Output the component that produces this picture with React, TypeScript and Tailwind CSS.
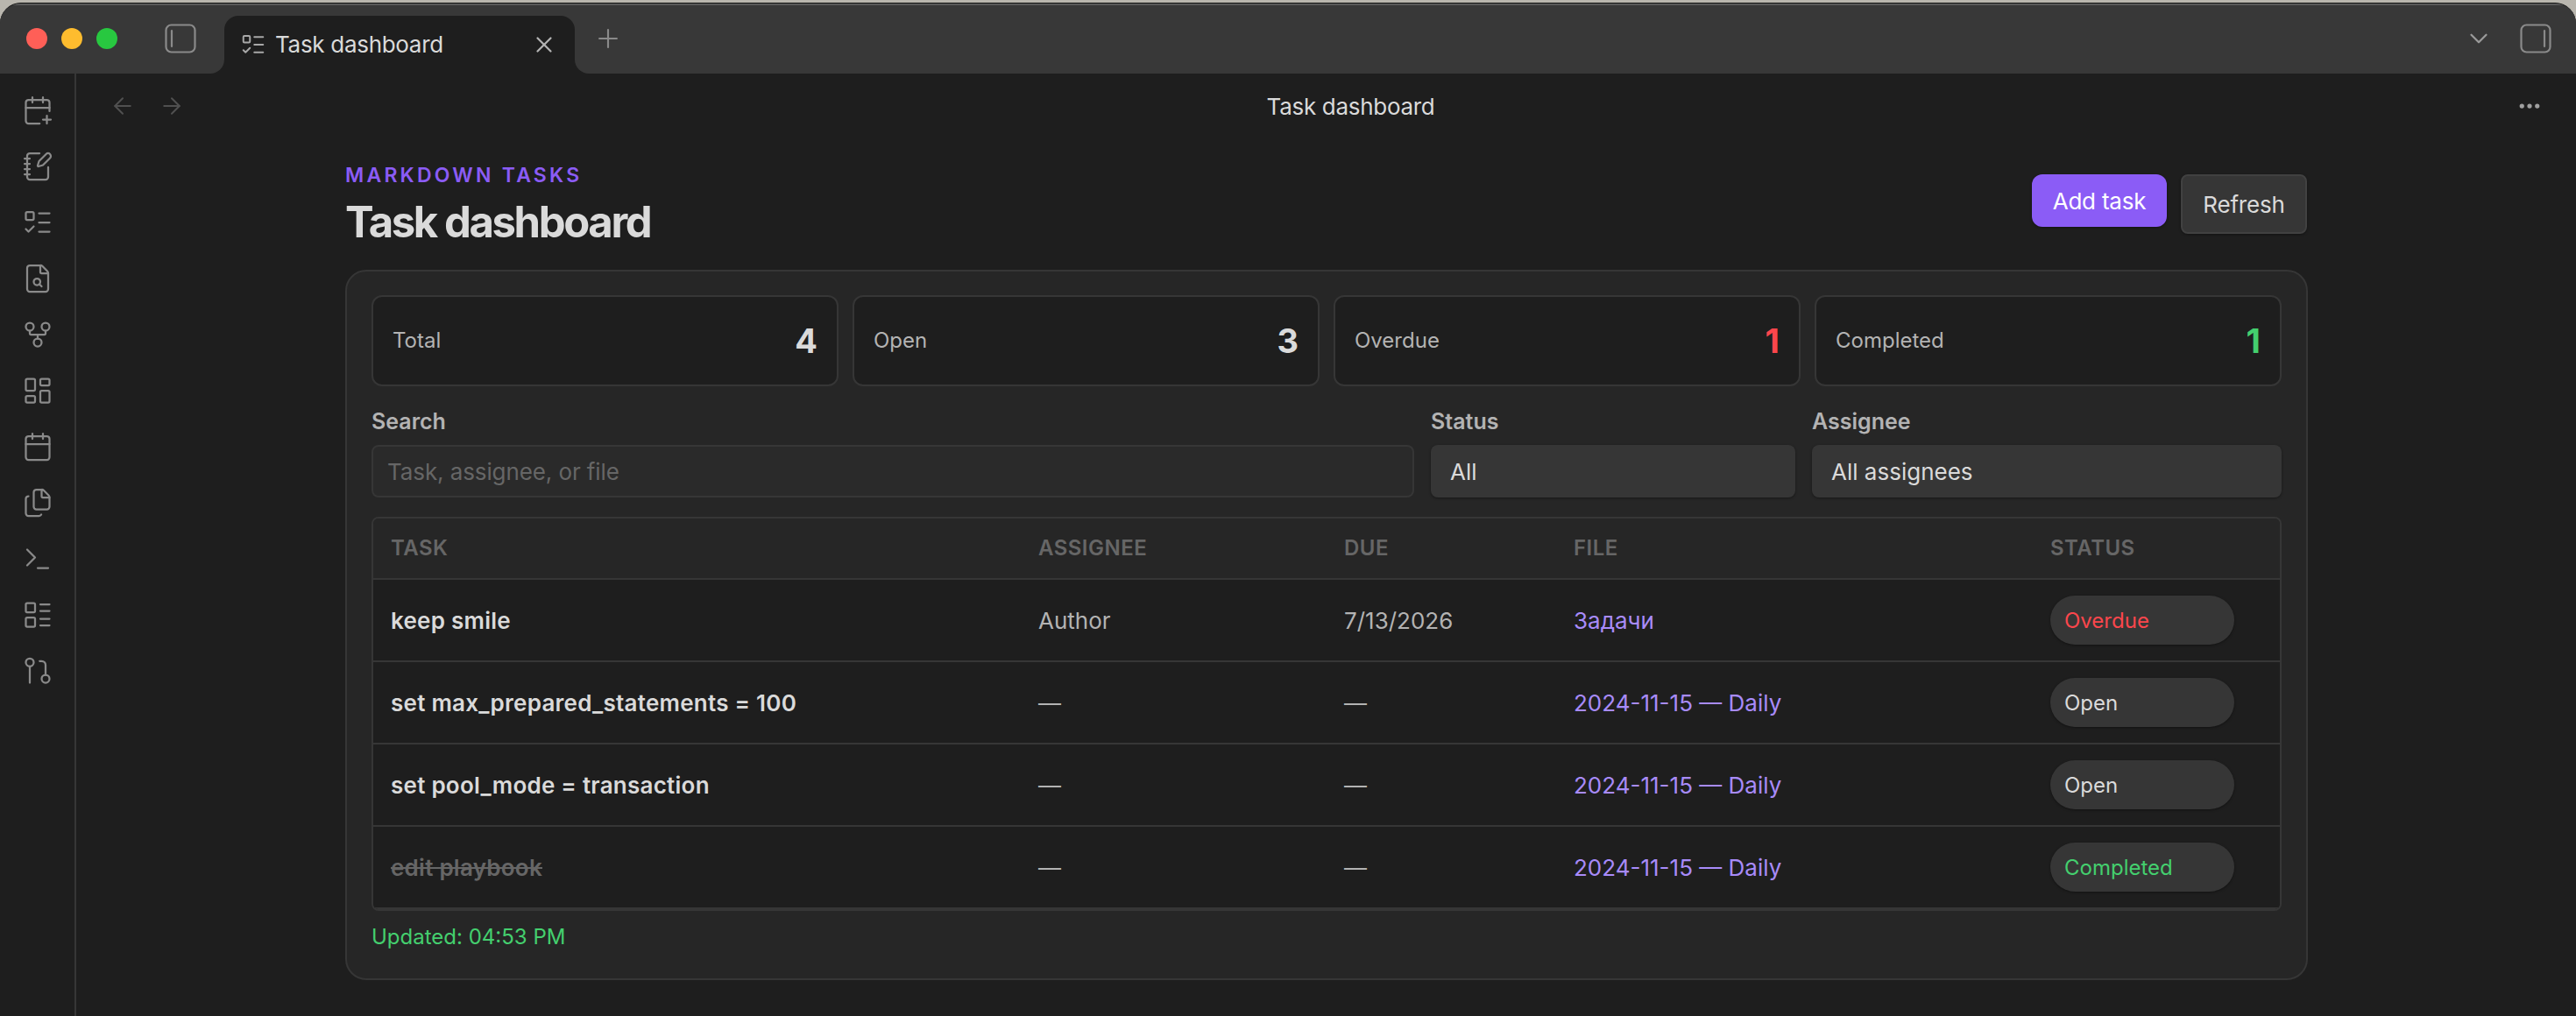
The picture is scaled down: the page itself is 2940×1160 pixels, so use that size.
import {
  ArrowLeft,
  ArrowRight,
  Calendar,
  CalendarPlus,
  ChevronDown,
  Ellipsis,
  FileSearch,
  Files,
  GitFork,
  LayoutDashboard,
  LayoutList,
  ListTodo,
  NotebookPen,
  Plus,
  Terminal,
  X,
} from 'lucide-react';

const stats = [
  { label: 'Total', value: '4', color: 'text-[#dadada]' },
  { label: 'Open', value: '3', color: 'text-[#dadada]' },
  { label: 'Overdue', value: '1', color: 'text-[#fb464c]' },
  { label: 'Completed', value: '1', color: 'text-[#44cf6e]' },
];

const rows = [
  { task: 'keep smile', assignee: 'Author', due: '7/13/2026', file: 'Задачи', status: 'Overdue', statusColor: 'text-[#fb464c]', done: false },
  { task: 'set max_prepared_statements = 100', assignee: '—', due: '—', file: '2024-11-15 — Daily', status: 'Open', statusColor: 'text-[#dadada]', done: false },
  { task: 'set pool_mode = transaction', assignee: '—', due: '—', file: '2024-11-15 — Daily', status: 'Open', statusColor: 'text-[#dadada]', done: false },
  { task: 'edit playbook', assignee: '—', due: '—', file: '2024-11-15 — Daily', status: 'Completed', statusColor: 'text-[#44cf6e]', done: true },
];

function PanelToggle({ side }: { side: 'left' | 'right' }) {
  return (
    <svg width="36" height="34" viewBox="0 0 36 34" fill="none" stroke="#8a8a8a" strokeWidth="2.2" strokeLinecap="round">
      <rect x="1.5" y="1.5" width="33" height="31" rx="6" />
      {side === 'left' ? <path d="M8 8v18" /> : <path d="M28 8v18" />}
    </svg>
  );
}

function BranchIcon() {
  return (
    <svg width="36" height="36" viewBox="0 0 24 24" fill="none" stroke="#8a8a8a" strokeWidth="1.5" strokeLinecap="round" strokeLinejoin="round">
      <circle cx="6" cy="5.5" r="3" />
      <path d="M6 8.5V21" />
      <path d="M13.5 4.5H15a3 3 0 0 1 3 3V15" />
      <circle cx="18" cy="18" r="3" />
    </svg>
  );
}

const ribbon = [CalendarPlus, NotebookPen, ListTodo, FileSearch, GitFork, LayoutDashboard, Calendar, Files, Terminal, LayoutList];

export default function App() {
  return (
    <div className="w-[2940px] h-[1160px] overflow-hidden bg-[#b9b6ae] pt-[3px] font-['Inter',sans-serif]">
      <div className="h-[1157px] flex flex-col rounded-t-[24px] overflow-hidden border-t border-[#111111] bg-[#1e1e1e]">
        {/* title bar */}
        <div className="h-[80px] shrink-0 bg-[#383838] border-t-2 border-[#5a5a5a] flex items-end relative">
          <div className="flex items-center gap-[16px] pl-[30px] self-start pt-[26px]">
            <span className="w-[24px] h-[24px] rounded-full bg-[#ff5f57]" />
            <span className="w-[24px] h-[24px] rounded-full bg-[#febc2e]" />
            <span className="w-[24px] h-[24px] rounded-full bg-[#28c840]" />
          </div>
          <div className="self-start ml-[54px] mt-[21px]">
            <PanelToggle side="left" />
          </div>
          <div className="relative ml-[32px] w-[400px] h-[66px] bg-[#1e1e1e] rounded-t-[16px] flex items-center pl-[18px] pr-[20px] text-[26px] text-[#dadada]">
            <span className="absolute left-[-16px] bottom-0 w-[16px] h-[16px] bg-[#1e1e1e]">
              <span className="block w-full h-full bg-[#383838] rounded-br-[16px]" />
            </span>
            <span className="absolute right-[-16px] bottom-0 w-[16px] h-[16px] bg-[#1e1e1e]">
              <span className="block w-full h-full bg-[#383838] rounded-bl-[16px]" />
            </span>
            <ListTodo size={30} strokeWidth={1.6} color="#a8a8a8" />
            <span className="ml-[10px] flex-1 leading-none tracking-[-0.3px]">Task dashboard</span>
            <X size={30} strokeWidth={1.8} color="#b3b3b3" />
          </div>
          <div className="self-start ml-[21px] mt-[21px]">
            <Plus size={34} strokeWidth={1.5} color="#8a8a8a" />
          </div>
          <div className="ml-auto self-start flex items-center gap-[30px] pr-[28px] mt-[21px]">
            <ChevronDown size={34} strokeWidth={1.6} color="#9a9a9a" />
            <PanelToggle side="right" />
          </div>
        </div>

        <div className="flex-1 flex min-h-0">
          {/* ribbon */}
          <div className="w-[87px] shrink-0 border-r-2 border-[#363636] flex flex-col items-center pt-[24px] gap-[28px]">
            {ribbon.map((Icon, i) => (
              <Icon key={i} size={36} strokeWidth={1.5} color="#8a8a8a" />
            ))}
            <BranchIcon />
          </div>

          <div className="flex-1 min-w-0 flex flex-col">
            {/* view header */}
            <div className="h-[74px] shrink-0 relative flex items-center pl-[38px] pr-[38px]">
              <ArrowLeft size={30} strokeWidth={1.6} color="#505050" />
              <ArrowRight size={30} strokeWidth={1.6} color="#505050" className="ml-[26px]" />
              <div className="flex-1 text-center text-[26px] tracking-[-0.3px] text-[#dadada]">Task dashboard</div>
              <Ellipsis size={30} strokeWidth={2.2} color="#a0a0a0" />
            </div>

            {/* content */}
            <div className="w-[2240px] ml-[307px]">
              <div className="flex justify-between items-start pt-[26px] h-[150px]">
                <div>
                  <div className="text-[23px] leading-[32px] font-semibold tracking-[0.14em] text-[#8b5cf6]">MARKDOWN TASKS</div>
                  <div className="text-[49px] leading-[58px] mt-[9px] font-bold tracking-[-2.4px] text-[#dadada]">Task dashboard</div>
                </div>
                <div className="flex items-start gap-[16px] pt-[15px] pr-[1px]">
                  <button className="h-[60px] w-[154px] rounded-[12px] bg-[#8b5cf6] text-white text-[26px] tracking-[-0.2px] shadow-[0_1px_3px_rgba(0,0,0,0.4)]">Add task</button>
                  <button className="h-[68px] w-[144px] rounded-[8px] bg-[#363636] border-2 border-[#414141] text-[#dadada] text-[26px] tracking-[-0.2px] shadow-[0_1px_3px_rgba(0,0,0,0.4)]">Refresh</button>
                </div>
              </div>

              <div className="h-[811px] rounded-[24px] bg-[#262626] border-2 border-[#363636] px-[28px] pt-[27px]">
                <div className="grid grid-cols-4 gap-[16px]">
                  {stats.map((s) => (
                    <div key={s.label} className="h-[104px] rounded-[12px] bg-[#1e1e1e] border-2 border-[#363636] flex items-center justify-between px-[22px]">
                      <span className="text-[24px] text-[#b3b3b3]">{s.label}</span>
                      <span className={`text-[38px] font-bold ${s.color}`}>{s.value}</span>
                    </div>
                  ))}
                </div>

                <div className="grid grid-cols-[minmax(0,1fr)_416px_536px] gap-[19px] mt-[24px]">
                  <label className="block">
                    <span className="block text-[25px] leading-[32px] font-semibold text-[#b3b3b3]">Search</span>
                    <input placeholder="Task, assignee, or file" className="mt-[11px] w-full h-[60px] rounded-[8px] bg-[#2a2a2a] border-2 border-[#363636] px-[16px] text-[26px] tracking-[-0.1px] text-[#dadada] placeholder:text-[#666666] outline-none" />
                  </label>
                  <label className="block">
                    <span className="block text-[25px] leading-[32px] font-semibold text-[#b3b3b3]">Status</span>
                    <select className="appearance-none mt-[11px] w-full h-[60px] rounded-[8px] bg-[#363636] px-[22px] text-[26px] text-[#dadada] outline-none shadow-[0_1px_3px_rgba(0,0,0,0.4)]">
                      <option>All</option>
                    </select>
                  </label>
                  <label className="block">
                    <span className="block text-[25px] leading-[32px] font-semibold text-[#b3b3b3]">Assignee</span>
                    <select className="appearance-none mt-[11px] w-full h-[60px] rounded-[8px] bg-[#363636] px-[22px] text-[26px] text-[#dadada] outline-none shadow-[0_1px_3px_rgba(0,0,0,0.4)]">
                      <option>All assignees</option>
                    </select>
                  </label>
                </div>

                <div className="mt-[22px] rounded-[8px] border-2 border-[#363636] overflow-hidden">
                  <table className="w-full table-fixed border-collapse">
                    <thead>
                      <tr className="h-[69px] bg-[#262626] border-b-2 border-[#363636] text-left text-[24px] tracking-[0.02em] text-[#666666]">
                        <th className="w-[737px] pl-[20px] font-semibold">TASK</th>
                        <th className="w-[349px] pl-[22px] font-semibold">ASSIGNEE</th>
                        <th className="w-[262px] pl-[22px] font-semibold">DUE</th>
                        <th className="w-[544px] pl-[22px] font-semibold">FILE</th>
                        <th className="pl-[22px] font-semibold">STATUS</th>
                      </tr>
                    </thead>
                    <tbody>
                      {rows.map((r) => (
                        <tr key={r.task} className="h-[94px] bg-[#1e1e1e] border-b-2 border-[#363636] text-[26px]">
                          <td className={`pl-[20px] font-semibold tracking-[0.25px] ${r.done ? 'line-through text-[#666666]' : 'text-[#dadada]'}`}>{r.task}</td>
                          <td className="pl-[22px] text-[#b3b3b3]">{r.assignee}</td>
                          <td className="pl-[22px] text-[#b3b3b3]">{r.due}</td>
                          <td className="pl-[22px] text-[#a88bfa]">{r.file}</td>
                          <td className="pl-[22px]">
                            <span className={`flex items-center w-[210px] h-[56px] rounded-full bg-[#363636] pl-[16px] pt-[2px] text-[24px] shadow-[0_1px_3px_rgba(0,0,0,0.4)] ${r.statusColor}`}>{r.status}</span>
                          </td>
                        </tr>
                      ))}
                    </tbody>
                  </table>
                </div>

                <div className="mt-[14px] text-[24px] leading-[32px] text-[#44cf6e]">Updated: 04:53 PM</div>
              </div>
            </div>
          </div>
        </div>
      </div>
    </div>
  );
}
